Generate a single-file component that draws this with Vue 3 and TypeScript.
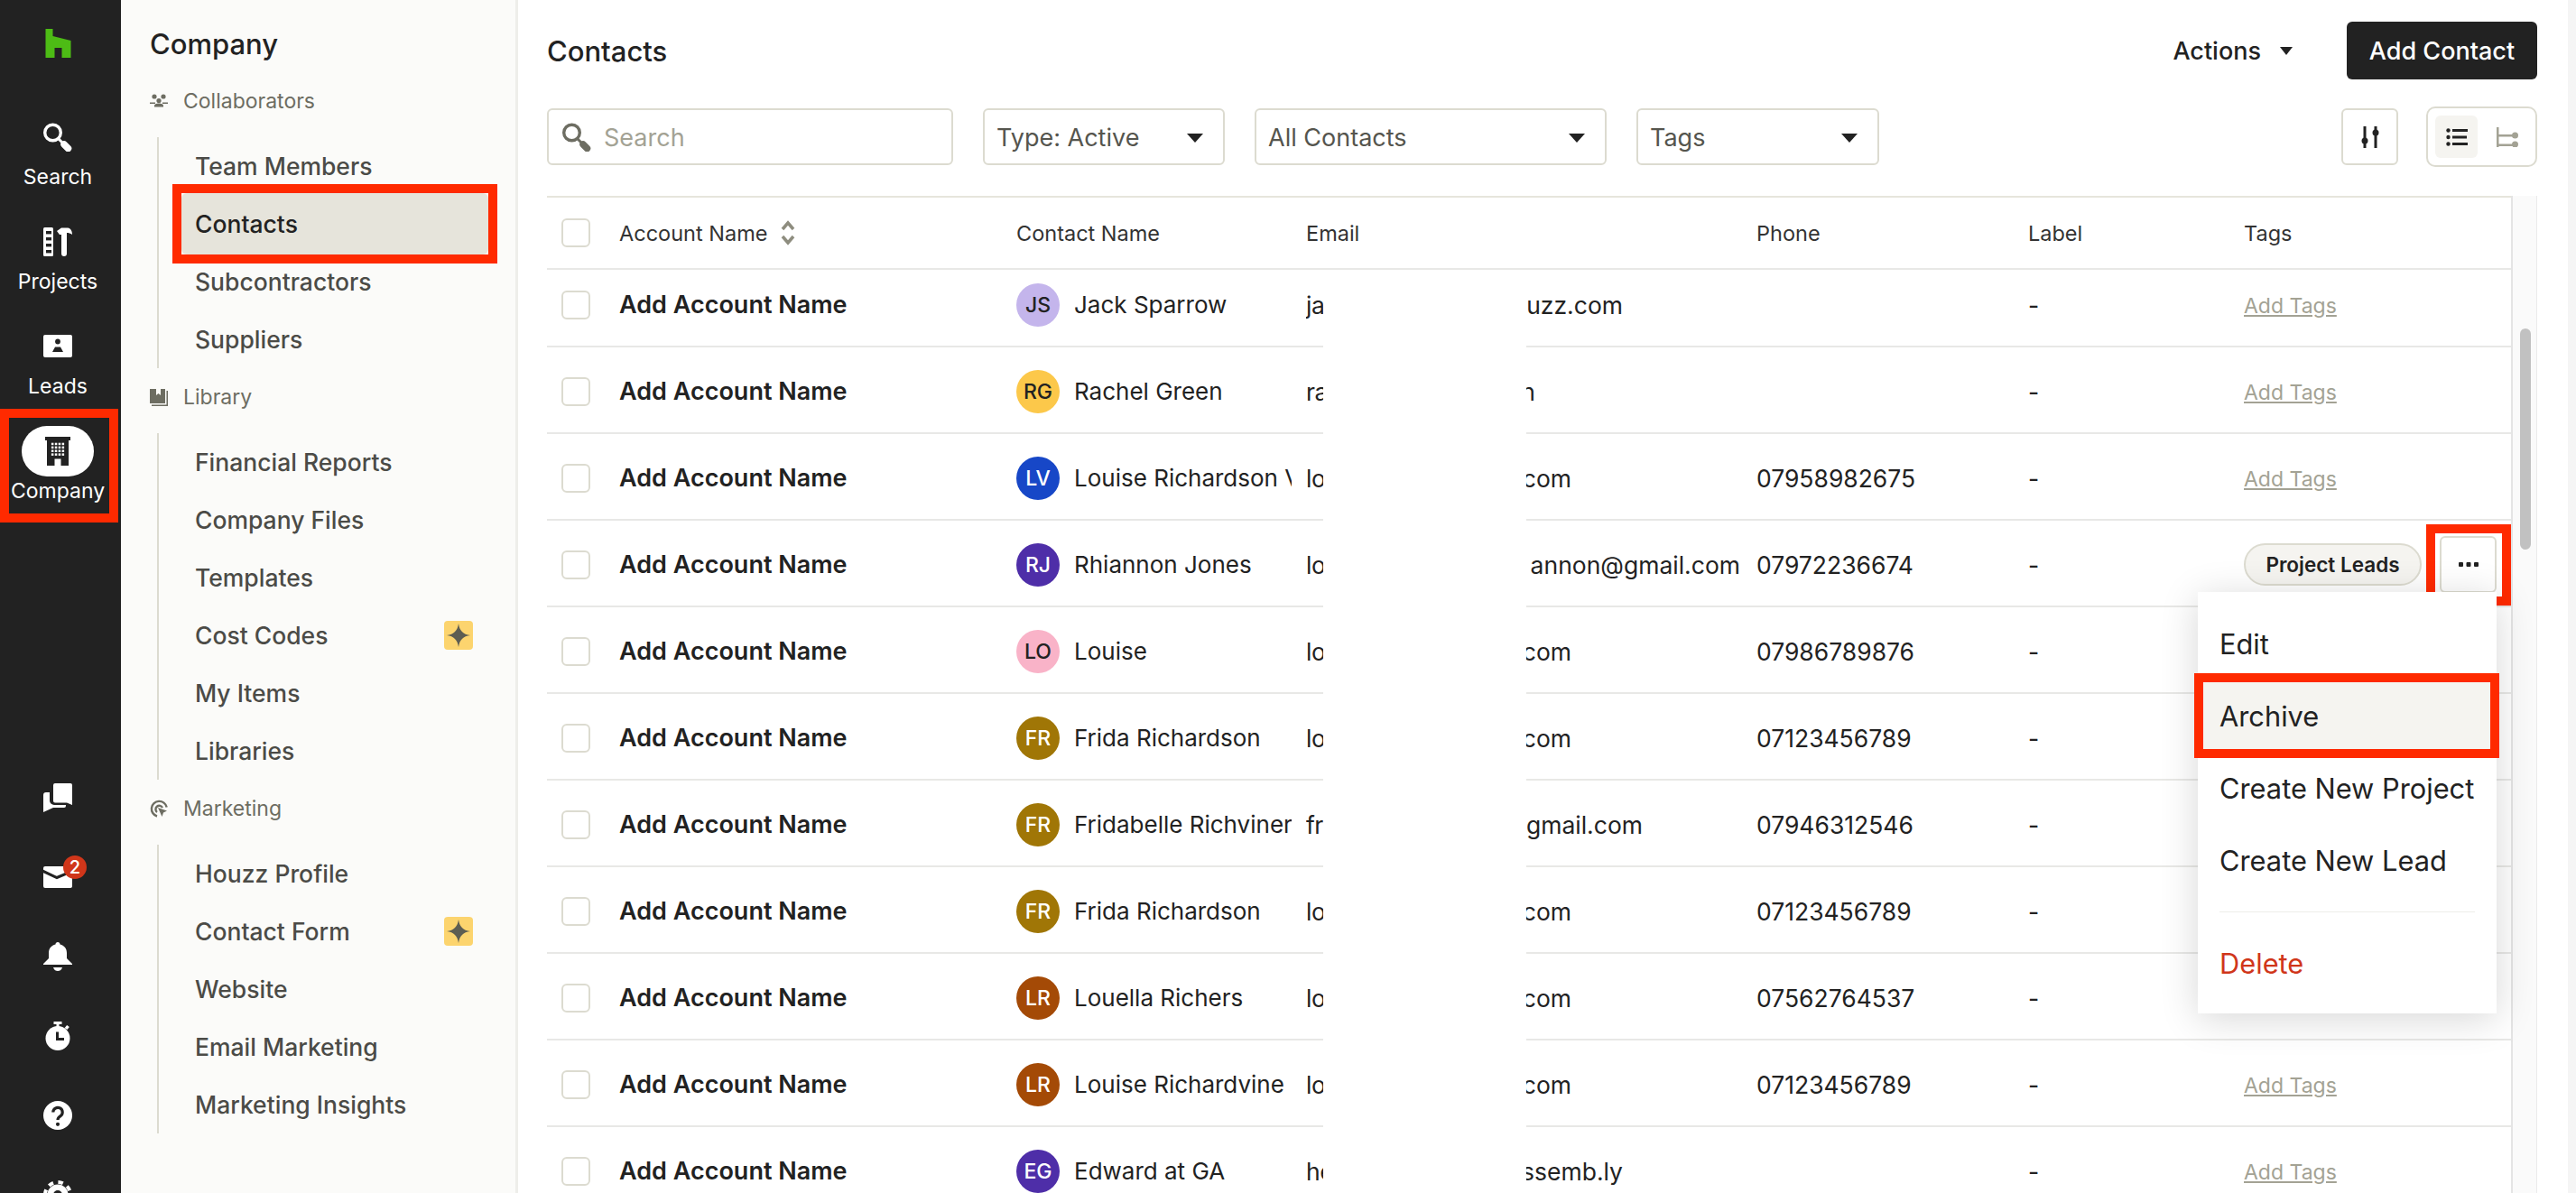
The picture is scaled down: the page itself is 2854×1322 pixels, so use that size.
<template>
  <div class="app">
    <nav class="rail">
      <svg class="logo" viewBox="0 0 28 32"><path d="M0 0H8V8L28 13V32H18V21H10V32H0Z" fill="#4dbc15" /></svg>

      <a class="rail-item">
        <span class="rail-icon">
          <svg viewBox="0 0 32 32" class="ic32" fill="none" stroke="#fff">
            <circle cx="10.5" cy="11" r="8.8" stroke-width="3.4" />
            <path d="M17 18L21 22" stroke-width="3" />
            <path d="M23 24L27.5 28.5" stroke-width="7.5" stroke-linecap="round" />
          </svg>
        </span>
        <span class="rail-label">Search</span>
      </a>
      <a class="rail-item">
        <span class="rail-icon">
          <svg viewBox="0 0 32 32" class="ic32">
            <rect width="11" height="32" rx="1.5" fill="#fff" />
            <rect v-for="y in [4, 11, 18, 25]" :key="y" x="3" :y="y" width="6" height="3.4" fill="#222" />
            <path d="M15 4L20 .5H27C30 .5 32 4 32 8C30 6.5 28 6 26 6V29A3 3 0 0 1 20 29V8H18Z" fill="#fff" />
          </svg>
        </span>
        <span class="rail-label">Projects</span>
      </a>
      <a class="rail-item">
        <span class="rail-icon">
          <svg viewBox="0 0 32 32" class="ic32">
            <rect y="3" width="32" height="25" rx="2" fill="#fff" />
            <circle cx="16" cy="10.5" r="2.9" fill="#222" />
            <path d="M10 22L13 16.5H19L22 22Z" fill="#222" />
          </svg>
        </span>
        <span class="rail-label">Leads</span>
      </a>
      <a class="rail-item company">
        <span class="rail-icon">
          <svg viewBox="0 0 32 32" class="ic32">
            <rect x="2" width="28" height="4" fill="#222" />
            <rect x="4" y="4" width="24" height="28" fill="#222" />
            <template v-for="r in 4" :key="r">
              <rect v-for="c in 4" :key="c" :x="5 + c * 3.9" :y="2.8 + r * 3.9" width="2.5" height="2.5" fill="#fff" />
            </template>
            <rect x="12.5" y="24.5" width="7" height="7.5" fill="#fff" />
          </svg>
        </span>
        <span class="rail-label">Company</span>
      </a>

      <div class="rail-bottom">
        <a class="rail-tool">
          <svg viewBox="0 0 32 32" class="ic32" fill="#fff">
            <path d="M11 2a2 2 0 0 1 2-2H30a2 2 0 0 1 2 2V24L26 21.500H13a2 2 0 0 1-2-2Z" />
            <path d="M0 13a3 3 0 0 1 3-3H7V19a5 5 0 0 0 5 5H25V25a2 2 0 0 1-2 2H11L0 32Z" />
          </svg>
        </a>
        <a class="rail-tool">
          <svg viewBox="0 0 32 24" class="ic-mail">
            <rect width="32" height="24" rx="2" fill="#fff" />
            <path d="M-1 5L15 12.500L33 5" fill="none" stroke="#222" stroke-width="3" />
          </svg>
          <span class="count-badge">2</span>
        </a>
        <a class="rail-tool">
          <svg viewBox="0 0 32 32" class="ic32" fill="#fff">
            <path d="M16 0C17.500 0 18.500 1 18.500 2.500C23 3.500 26 7 26 12V18L32 24V25H0V24L6 18V12C6 7 9 3.500 13.500 2.500C13.500 1 14.500 0 16 0Z" />
            <path d="M11 28H21C20 31 18 32 16 32C14 32 12 31 11 28Z" />
          </svg>
        </a>
        <a class="rail-tool">
          <svg viewBox="0 0 32 32" class="ic32" fill="#fff">
            <circle cx="16" cy="18.500" r="13.500" />
            <rect x="11.500" width="9" height="3" />
            <rect x="14.500" y="2" width="3" height="4" />
            <path d="M25 8L27.500 5" stroke="#fff" stroke-width="3.500" />
            <path d="M15.500 11.500V19.500H23" fill="none" stroke="#222" stroke-width="3" />
          </svg>
        </a>
        <a class="rail-tool">
          <svg viewBox="0 0 32 32" class="ic32">
            <circle cx="16" cy="16" r="16" fill="#fff" />
            <path d="M10.800 12.500a5.200 5.200 0 1 1 8 4.400C17 18 16 19 16 21" fill="none" stroke="#222" stroke-width="3.200" />
            <circle cx="16" cy="25.800" r="2.100" fill="#222" />
          </svg>
        </a>
        <a class="rail-tool">
          <svg viewBox="0 0 32 32" class="ic32">
            <circle cx="16" cy="16" r="11.500" fill="#fff" />
            <circle cx="16" cy="16" r="14" fill="none" stroke="#fff" stroke-width="4" stroke-dasharray="5.500 5.500" />
            <circle cx="16" cy="16" r="5" fill="#222" />
          </svg>
        </a>
      </div>
    </nav>

    <aside class="side">
      <h2 class="side-title">Company</h2>

      <template v-for="group in groups" :key="group.name">
        <div class="side-head">
          <svg v-if="group.icon === 'people'" viewBox="0 0 20 16" class="side-icon" fill="#6d6d62">
            <circle cx="5" cy="3" r="2.600" />
            <circle cx="15" cy="3" r="2.600" />
            <circle cx="10" cy="7.500" r="2.600" />
            <path d="M0 9.500H6V11H0ZM14 9.500H20V11H14ZM5 13C5 11.500 7 10.500 10 10.500S15 11.500 15 13V14.500H5Z" />
          </svg>
          <svg v-else-if="group.icon === 'book'" viewBox="0 0 20 20" class="side-icon" fill="#6d6d62">
            <path d="M0 1H7V8L9.500 6L12 8V1H17V17H0Z" />
            <path d="M18.500 3H20V20H2V18.500H18.500Z" />
          </svg>
          <svg v-else viewBox="0 0 20 20" class="side-icon" fill="none" stroke="#6d6d62" stroke-width="2.400">
            <path d="M8 18.500A8.500 8.500 0 1 1 18.700 8.500" />
            <path d="M8 14A4 4 0 1 1 14 9" />
            <path d="M9 9L19 12.500L15 14.500L13.500 19Z" fill="#6d6d62" stroke="none" />
          </svg>
          <span>{{ group.name }}</span>
        </div>
        <ul class="side-list">
          <li v-for="item in group.items" :key="item.label" class="side-item" :class="{ active: item.active }">
            <span>{{ item.label }}</span>
            <span v-if="item.spark" class="spark">
              <svg viewBox="0 0 20 20" width="26" height="26"><path d="M10 0C10.800 6 14 9.200 20 10C14 10.800 10.800 14 10 20C9.200 14 6 10.800 0 10C6 9.200 9.200 6 10 0Z" fill="#5d5d52" /></svg>
            </span>
          </li>
        </ul>
      </template>
    </aside>

    <main class="main">
      <header class="top">
        <h1 class="title">Contacts</h1>
        <button class="actions">Actions<i class="caret small" /></button>
        <button class="add">Add Contact</button>
      </header>

      <div class="filters">
        <label class="search">
          <svg viewBox="0 0 32 32" class="ic32" fill="none" stroke="#6d6d62">
            <circle cx="10.500" cy="11" r="8.800" stroke-width="3.400" />
            <path d="M17 18L21 22" stroke-width="3" />
            <path d="M23 24L27.500 28.500" stroke-width="7.500" stroke-linecap="round" />
          </svg>
          <span>Search</span>
        </label>
        <div class="select type">Type: Active<i class="caret" /></div>
        <div class="select all">All Contacts<i class="caret" /></div>
        <div class="select tags">Tags<i class="caret" /></div>
        <button class="square">
          <svg viewBox="0 0 24 24" width="24" height="24" fill="#222" stroke="#222">
            <path d="M6 0V24M18 0V24" stroke-width="3" />
            <circle cx="6" cy="16" r="3.500" stroke="none" />
            <circle cx="18" cy="7" r="3.500" stroke="none" />
          </svg>
        </button>
        <div class="toggle">
          <span class="toggle-cell on">
            <svg viewBox="0 0 24 20" width="24" height="20" fill="#222">
              <circle cx="2.500" cy="2.500" r="2.200" /><circle cx="2.500" cy="10" r="2.200" /><circle cx="2.500" cy="17.500" r="2.200" />
              <rect x="7" y="1" width="17" height="3" /><rect x="7" y="8.500" width="16" height="3" /><rect x="7" y="16" width="17" height="3" />
            </svg>
          </span>
          <span class="toggle-cell">
            <svg viewBox="0 0 24 22" width="24" height="22" fill="#a3a294">
              <rect width="2.500" height="22" />
              <rect y="8" width="20" height="2.500" /><rect y="18.500" width="20" height="2.500" />
              <circle cx="20.500" cy="9" r="3.500" /><circle cx="20.500" cy="19" r="3.500" />
            </svg>
          </span>
        </div>
      </div>

      <section class="table-area">
        <div class="table">
          <div class="row-grid thead">
            <span class="box" />
            <span class="th-account">Account Name
              <svg viewBox="0 0 16 28" width="16" height="28" fill="none" stroke="#8e8d7f" stroke-width="3.500">
                <path d="M2 10L8 3L14 10M2 18L8 25L14 18" />
              </svg>
            </span>
            <span>Contact Name</span>
            <span>Email</span>
            <span>Phone</span>
            <span>Label</span>
            <span>Tags</span>
          </div>
          <div class="tbody">
            <div v-for="(row, i) in rows" :key="i" class="row-grid trow">
              <span class="box" />
              <span class="account">Add Account Name</span>
              <span class="contact">
                <span class="avatar" :style="{ background: row.color, color: row.dark ? '#222' : '#fff' }">{{ row.initials }}</span>
                <span class="contact-name">{{ row.name }}</span>
              </span>
              <span class="email">
                <span class="email-start">{{ row.mailStart }}</span>
                <span class="email-end" :style="{ width: row.mailEndAt - 1466 + 'px' }">{{ row.mailEnd }}</span>
              </span>
              <span>{{ row.phone }}</span>
              <span>-</span>
              <span class="tags-cell">
                <template v-if="row.pill">
                  <span class="pill">{{ row.pill }}</span>
                  <button class="more">
                    <svg viewBox="0 0 22 6" width="22" height="6" fill="#222"><rect width="5" height="5" rx="1" /><rect x="8.500" width="5" height="5" rx="1" /><rect x="17" width="5" height="5" rx="1" /></svg>
                  </button>
                </template>
                <a v-else-if="!row.underMenu" class="add-tags">Add Tags</a>
              </span>
            </div>
          </div>
        </div>
        <div class="track"><div class="thumb" /></div>

        <div class="mask" />

        <div class="menu">
          <a class="menu-item">Edit</a>
          <a class="menu-item hover">Archive</a>
          <a class="menu-item">Create New Project</a>
          <a class="menu-item">Create New Lead</a>
          <hr class="menu-line" />
          <a class="menu-item danger">Delete</a>
        </div>
      </section>
    </main>
    <div class="page-bar" />
  </div>
</template>

<script setup lang="ts">
interface NavItem {
  label: string
  active?: boolean
  spark?: boolean
}

interface Row {
  initials: string
  name: string
  color: string
  dark?: boolean
  mailStart: string
  mailEnd: string
  mailEndAt: number
  phone: string
  pill?: string
  underMenu?: boolean
}

const groups: { name: string; icon: string; items: NavItem[] }[] = [
  {
    name: 'Collaborators',
    icon: 'people',
    items: [
      { label: 'Team Members' },
      { label: 'Contacts', active: true },
      { label: 'Subcontractors' },
      { label: 'Suppliers' },
    ],
  },
  {
    name: 'Library',
    icon: 'book',
    items: [
      { label: 'Financial Reports' },
      { label: 'Company Files' },
      { label: 'Templates' },
      { label: 'Cost Codes', spark: true },
      { label: 'My Items' },
      { label: 'Libraries' },
    ],
  },
  {
    name: 'Marketing',
    icon: 'target',
    items: [
      { label: 'Houzz Profile' },
      { label: 'Contact Form', spark: true },
      { label: 'Website' },
      { label: 'Email Marketing' },
      { label: 'Marketing Insights' },
    ],
  },
]

const rows: Row[] = [
  { initials: 'JS', name: 'Jack Sparrow', color: '#c4b5ec', dark: true, mailStart: 'ja', mailEnd: 'houzz.com', mailEndAt: 1798, phone: '' },
  { initials: 'RG', name: 'Rachel Green', color: '#fcc84a', dark: true, mailStart: 'ra', mailEnd: 'rachelgreen', mailEndAt: 1701, phone: '' },
  { initials: 'LV', name: 'Louise Richardson Vine', color: '#1747c7', mailStart: 'lo', mailEnd: 'gmail.com', mailEndAt: 1741, phone: '07958982675' },
  { initials: 'RJ', name: 'Rhiannon Jones', color: '#4e2ea8', mailStart: 'lo', mailEnd: 'annon@gmail.com', mailEndAt: 1928, phone: '07972236674', pill: 'Project Leads' },
  { initials: 'LO', name: 'Louise', color: '#f9b3c8', dark: true, mailStart: 'lo', mailEnd: 'gmail.com', mailEndAt: 1741, phone: '07986789876', underMenu: true },
  { initials: 'FR', name: 'Frida Richardson', color: '#a07606', mailStart: 'lo', mailEnd: 'gmail.com', mailEndAt: 1741, phone: '07123456789', underMenu: true },
  { initials: 'FR', name: 'Fridabelle Richvinery', color: '#a07606', mailStart: 'fr', mailEnd: 'gmail.com', mailEndAt: 1820, phone: '07946312546', underMenu: true },
  { initials: 'FR', name: 'Frida Richardson', color: '#a07606', mailStart: 'lo', mailEnd: 'gmail.com', mailEndAt: 1741, phone: '07123456789', underMenu: true },
  { initials: 'LR', name: 'Louella Richers', color: '#a44a06', mailStart: 'lo', mailEnd: 'gmail.com', mailEndAt: 1741, phone: '07562764537', underMenu: true },
  { initials: 'LR', name: 'Louise Richardvine', color: '#a44a06', mailStart: 'lo', mailEnd: 'gmail.com', mailEndAt: 1741, phone: '07123456789' },
  { initials: 'EG', name: 'Edward at GA', color: '#4e2ea8', mailStart: 'he', mailEnd: 'generalassemb.ly', mailEndAt: 1798, phone: '' },
]
</script>

<style>
html, body {
  margin: 0;
  background: #fff;
}
</style>

<style scoped>
* {
  box-sizing: border-box;
}

.app {
  display: flex;
  height: 1322px;
  overflow: hidden;
  font-family: Inter, "Noto Sans", sans-serif;
  color: #222;
  background: #fff;
}

svg {
  display: block;
  flex: none;
}

.ic32 {
  width: 32px;
  height: 32px;
}

/* left rail */
.rail {
  flex: none;
  width: 134px;
  height: 1322px;
  padding: 32px 6px 0 0;
  background: #222;
  color: #fff;
  display: flex;
  flex-direction: column;
  align-items: center;
}

.logo {
  width: 29px;
  height: 32px;
  margin-bottom: 60px;
}

.rail-item {
  position: relative;
  width: 100%;
  height: 88px;
  margin-bottom: 28px;
  display: flex;
  flex-direction: column;
  align-items: center;
}

.rail-icon {
  width: 80px;
  height: 56px;
  border-radius: 28px;
  display: flex;
  align-items: center;
  justify-content: center;
}

.rail-label {
  font-size: 23px;
  line-height: 32px;
}

.company .rail-icon {
  background: #fff;
}

.company::before {
  content: "";
  position: absolute;
  box-sizing: border-box;
  left: 0;
  top: -19px;
  width: 131px;
  height: 126px;
  border: 10px solid #ff2a00;
}

.rail-bottom {
  margin-top: 252px;
}

.rail-tool {
  position: relative;
  height: 88px;
  display: flex;
  align-items: center;
  justify-content: center;
}

.ic-mail {
  width: 32px;
  height: 24px;
}

.count-badge {
  position: absolute;
  left: 22px;
  top: 20px;
  width: 26px;
  height: 26px;
  border-radius: 50%;
  background: #d0361a;
  color: #fff;
  font-size: 20px;
  font-weight: 500;
  line-height: 26px;
  text-align: center;
}

/* second column */
.side {
  flex: none;
  width: 440px;
  padding: 31px 0 0 32px;
  background: #fbfbf9;
  border-right: 3px solid #eeeeea;
}

.side-title {
  margin: 0 0 25px;
  font-size: 31px;
  font-weight: 500;
  line-height: 36px;
}

.side-head {
  display: flex;
  align-items: center;
  gap: 17px;
  height: 40px;
  font-size: 23px;
  color: #6d6d62;
}

.side-icon {
  width: 20px;
  height: 20px;
}

.side-list {
  list-style: none;
  margin: 20px 0 12px 8px;
  padding: 0;
  border-left: 2px solid #dcdbd0;
}

.side-item {
  position: relative;
  display: flex;
  align-items: center;
  justify-content: space-between;
  height: 64px;
  margin-left: 25px;
  width: 340px;
  padding: 0 17px 0 15px;
  border-radius: 6px;
  font-size: 26.500px;
  font-weight: 500;
  color: #4b4b47;
}

.side-item.active {
  height: 68px;
  margin-top: -2px;
  margin-bottom: -2px;
  background: #e6e4db;
  color: #222;
}

.side-item.active::before {
  content: "";
  position: absolute;
  inset: -10px;
  border: 10px solid #ff2a00;
}

.spark {
  width: 32px;
  height: 32px;
  border-radius: 4px;
  background: #fcd46e;
  display: flex;
  align-items: center;
  justify-content: center;
}

/* main */
.main {
  flex: 1;
  min-width: 0;
  padding: 24px 34px 0 32px;
  display: flex;
  flex-direction: column;
}

.top {
  display: flex;
  align-items: center;
  height: 64px;
}

.title {
  flex: 1;
  margin: 0;
  font-size: 31px;
  font-weight: 500;
}

button {
  font: inherit;
  color: inherit;
  border: 0;
  background: none;
  padding: 0;
}

.actions {
  display: flex;
  align-items: center;
  gap: 21px;
  margin-right: 60px;
  font-size: 27px;
  font-weight: 500;
}

.add {
  width: 211px;
  height: 64px;
  border-radius: 6px;
  background: #222;
  color: #fff;
  font-size: 27px;
  font-weight: 500;
}

.caret {
  width: 0;
  height: 0;
  border-left: 9.500px solid transparent;
  border-right: 9.500px solid transparent;
  border-top: 10px solid #222;
}

.caret.small {
  border-left-width: 7.500px;
  border-right-width: 7.500px;
  border-top-width: 9px;
}

.filters {
  display: flex;
  align-items: center;
  gap: 33px;
  height: 63px;
  margin-top: 32px;
}

.search, .select, .square, .toggle {
  border: 2px solid #dcdbd0;
  border-radius: 6px;
  height: 63px;
  display: flex;
  align-items: center;
  background: #fff;
}

.search {
  width: 450px;
  gap: 14px;
  padding: 1px 0 0 15px;
  font-size: 27px;
  color: #a3a294;
}

.select {
  justify-content: space-between;
  padding: 2px 22px 0 13px;
  font-size: 27px;
  color: #55554e;
}

.type {
  width: 268px;
}

.all {
  width: 390px;
}

.tags {
  width: 269px;
  margin-right: auto;
}

.square {
  width: 63px;
  justify-content: center;
  margin-right: -2px;
}

.toggle {
  width: 123px;
  height: 67px;
  border-radius: 10px;
  padding: 0 8px;
  gap: 0;
  justify-content: space-between;
}

.toggle-cell {
  width: 47px;
  height: 47px;
  border-radius: 6px;
  display: flex;
  align-items: center;
  justify-content: center;
}

.toggle-cell.on {
  background: #f5f4f0;
}

.table-area {
  position: relative;
  display: flex;
  flex: 1;
  min-height: 0;
  margin-top: 34px;
}

.table {
  flex: 1;
  min-width: 0;
  display: flex;
  flex-direction: column;
  border-top: 2px solid #e6e5dc;
}

.row-grid {
  display: grid;
  grid-template-columns: 80px 440px 321px 499px 301px 239px 1fr;
  align-items: center;
  border-bottom: 2px solid #e8e8e6;
}

.thead {
  flex: none;
  height: 80px;
  font-size: 23.500px;
  color: #333;
}

.th-account {
  display: flex;
  align-items: center;
  gap: 15px;
}

.box {
  width: 32px;
  height: 32px;
  margin-left: 16px;
  border: 2px solid #dcdbd0;
  border-radius: 6px;
  background: #fff;
}

.tbody {
  flex: 1;
  min-height: 0;
  overflow: hidden;
}

.trow {
  height: 96px;
  padding-top: 3px;
  font-size: 26.500px;
}

.trow:first-child {
  margin-top: -10px;
}

.account {
  font-size: 27px;
  font-weight: 600;
}

.contact {
  display: flex;
  align-items: center;
  gap: 16px;
  min-width: 0;
}

.avatar {
  flex: none;
  width: 48px;
  height: 48px;
  border-radius: 50%;
  display: flex;
  align-items: center;
  justify-content: center;
  font-size: 23px;
  font-weight: 500;
}

.contact-name {
  width: 241px;
  overflow: hidden;
  white-space: nowrap;
  font-size: 26px;
}

.email {
  display: flex;
  white-space: nowrap;
}

.email-start {
  flex: none;
  width: 19px;
  overflow: hidden;
  letter-spacing: -0.5px;
}

.email-end {
  flex: none;
  text-align: right;
}

.tags-cell {
  display: flex;
  align-items: center;
  gap: 20px;
}

.add-tags {
  padding-top: 2px;
  font-size: 23px;
  color: #a3a294;
  text-decoration: underline;
}

.pill {
  width: 197px;
  height: 47px;
  border: 2px solid #dcdbd0;
  border-radius: 24px;
  background: #f5f4f0;
  display: flex;
  align-items: center;
  justify-content: center;
  font-size: 22.500px;
  font-weight: 600;
}

.more {
  position: relative;
  flex: none;
  width: 63px;
  height: 63px;
  border: 2px solid #dcdbd0;
  border-radius: 6px;
  background: #fff;
  display: flex;
  align-items: center;
  justify-content: center;
}

.more::before {
  content: "";
  position: absolute;
  left: -17px;
  right: -18px;
  top: -15px;
  bottom: -16px;
  border: 10px solid #ff2a00;
}

.track {
  flex: none;
  width: 29px;
  padding: 147px 6px 0 8px;
  background: #fafafa;
  border-left: 2px solid #e4e4e4;
  border-right: 1px solid #eaeaea;
}

.thumb {
  height: 245px;
  border-radius: 8px;
  background: #c1c1c1;
}

.mask {
  position: absolute;
  left: 860px;
  top: 84px;
  bottom: 0;
  width: 225px;
  background: #fff;
}

.menu {
  position: absolute;
  left: 1829px;
  top: 439px;
  width: 331px;
  padding: 17px 0 16px;
  background: #fff;
  box-shadow: 0 6px 40px rgba(0, 0, 0, 0.16);
}

.menu-item {
  position: relative;
  display: flex;
  align-items: center;
  height: 80px;
  padding-left: 24px;
  font-size: 30.800px;
}

.menu-item.hover {
  background: #f5f4f0;
}

.menu-item.hover::before {
  content: "";
  position: absolute;
  left: -4px;
  right: -3px;
  top: -7px;
  bottom: -7px;
  border: 10px solid #ff2a00;
}

.menu-item.danger {
  color: #d0361a;
}

.menu-line {
  margin: 17px 24px 16px;
  border: 0;
  border-top: 1px solid #eeeeea;
}

.page-bar {
  flex: none;
  width: 9px;
  background: #f5f5f5;
}
</style>
